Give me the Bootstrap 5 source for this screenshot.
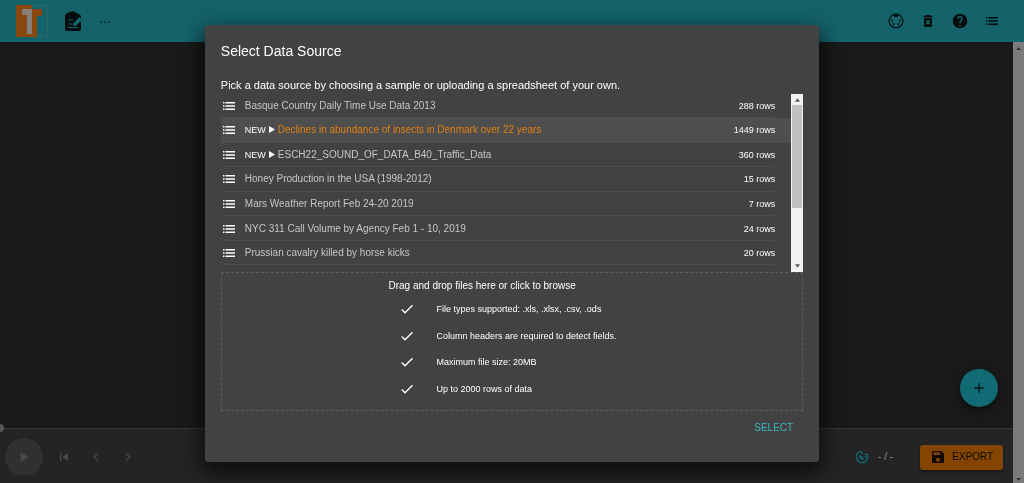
<!DOCTYPE html>
<html lang="en">
<head>
<meta charset="utf-8">
<meta name="viewport" content="width=device-width, initial-scale=1">
<title>TwoTone</title>
<link href="https://cdn.jsdelivr.net/npm/bootstrap@5.3.0/dist/css/bootstrap.min.css" rel="stylesheet">
<style>
body { font-family: "Liberation Sans", Arial, sans-serif; font-size: 10px; line-height: 16px; background: #191919; color: #fff; }
button { font: inherit; }
svg { display: block; fill: currentColor; flex: none; }
.tool { border: 0; background: none; padding: 0; color: inherit; display: flex; }
.topbar { background: #14636b; height: 42px; padding: 0 24px 0 15px; color: #030d0e; flex: none; }
.topbar-left { gap: 16px; }
.topbar-right { gap: 16px; }
.menu-btn { width: 16px; justify-content: center; }
.logo-art { width: 34px; height: 34px; }
.page-scroll { width: 11px; background: #7b7b7b; color: #303030; flex: none; padding: 5px 0 2px; }
.add-btn { right: 15px; bottom: 21px; width: 38px; height: 38px; border-radius: 50%; background: #126b74; color: #06191b; border: 0; padding: 0; box-shadow: 0 3px 6px rgba(0,0,0,.5); }
.timeline { appearance: none; display: block; width: calc(100% + 4px); height: 8px; margin: -4px 0 -3px -4px; background: linear-gradient(#353535, #353535) center / 100% 1px no-repeat; position: relative; }
.timeline::-webkit-slider-thumb { appearance: none; width: 8px; height: 8px; border-radius: 50%; background: #555; }
.transport { background: #242424; color: #4a4a4a; height: 54px; padding: 2px 10px 0 5px; }
.play-btn { width: 38px; height: 38px; border-radius: 50%; background: #303030; }
.steps { gap: 16px; margin-left: 13px; }
.speed-btn { color: #126b74; }
.readout { color: #929292; margin-right: 27px; }
.export-btn { background: #854500; color: #130a00; height: 25px; border: 0; border-radius: 3px; padding: 0 10px; gap: 6px; box-shadow: 0 2px 3px rgba(0,0,0,.4); }
.picker { width: 60%; background: #424242; border-radius: 3px; padding: 16px 16px 26px; margin-top: 3px; box-shadow: 0 8px 20px 4px rgba(0,0,0,.6); }
.picker-title { font-size: 14px; line-height: 20px; margin: 0 0 16px; font-weight: 400; }
.picker-lead { font-size: 11px; line-height: 16px; margin: 0; }
.sources { height: 179px; }
.source-list { display: grid; grid-auto-rows: 1fr; height: 172px; margin-top: 1px; }
.source { width: 100%; height: 100%; text-align: left; color: #c6c6c6; background: none; border: 0; padding: 0 16px 0 2px; gap: 10px; }
.source.active { background: #4e4e4e; color: #e07f12; }
.source-list li { background: linear-gradient(#4d4d4d, #4d4d4d) left bottom / calc(100% - 16px) 1px no-repeat; }
.source svg, .source .tag, .source .count { color: #fff; }
.source .tag, .source .count, .rules { font-size: 9px; }
.source .tag { margin-right: 3px; }
.source .tag svg { display: inline-block; margin: -2px 0 0 3px; }
.list-scroll { width: 12px; margin-top: 1px; background: #f1f1f1; color: #555; padding: 4px 1px; }
.list-scroll .thumb { height: 103px; margin-top: 3px; margin-bottom: auto; background: #c1c1c1; width: 100%; }
.dropzone { display: block; border: 1px dashed #5e5e5e; height: 139px; cursor: pointer; padding-top: 5px; }
.dropzone-inner { width: 247px; }
.rules { display: grid; grid-auto-rows: 1fr; height: 107px; margin: 2px 0 0; padding-left: 11px; }
.rules svg { margin-right: 21px; }
.select-btn { color: #37b6c4; padding: 0 10px; margin-top: 9px; }
</style>
</head>
<body class="vh-100 d-flex flex-column overflow-hidden">
<svg class="d-none">
  <symbol id="i-list" viewBox="0 0 12 12"><path d="M0 2h1.500v1.500H0zM0 5.200h1.500v1.500H0zM0 8.400h1.500v1.500H0zM2.500 2H12v1.500H2.500zM2.500 5.200H12v1.500H2.500zM2.500 8.400H12v1.500H2.500z"/></symbol>
  <symbol id="i-check" viewBox="0 0 24 24"><path d="M9 16.200 4.800 12l-1.400 1.400L9 19 21 7l-1.400-1.400z"/></symbol>
  <symbol id="i-up" viewBox="0 0 6 4"><path d="M3 0 6 4H0z"/></symbol>
  <symbol id="i-down" viewBox="0 0 6 4"><path d="M3 4 6 0H0z"/></symbol>
  <symbol id="i-right" viewBox="0 0 6 7"><path d="M0 0 6 3.500 0 7z"/></symbol>
</svg>

<header class="topbar d-flex align-items-center justify-content-between">
  <div class="topbar-left d-flex align-items-center">
    <svg class="logo-art" viewBox="0 0 34 34" role="img" aria-label="TwoTone"><path d="M1.500 1.500h31v31h-31z" fill="none" stroke="#2d6866"/><path fill="#8a4710" d="M1 1h16v4h10v7h-5v21H1z"/><path fill="#857e7a" d="M7 5h10v25h-5V11H7z"/></svg>
    <button class="tool" aria-label="Edit project"><svg width="16" height="22" viewBox="0 0 16 22"><path d="M8 1 14 4q2 1 2 3v12q0 2-2 2H2q-2 0-2-2V6q0-2 2-3z"/><path d="M3 10h5M3 14h4M3 17.500h10" fill="none" stroke="#14636b" stroke-width="1.200"/><path d="m14.500 7 1.500 1.500v2.500L10.500 16H8v-2.500z" fill="#14636b"/></svg></button>
    <button class="tool" aria-label="More"><svg width="16" height="12" viewBox="0 0 16 12"><circle cx="4" cy="7" r=".8"/><circle cx="8" cy="7" r=".8"/><circle cx="12" cy="7" r=".8"/></svg></button>
  </div>
  <div class="topbar-right d-flex align-items-center">
    <button class="tool" aria-label="MIDI"><svg width="16" height="16" viewBox="0 0 16 16"><circle cx="8" cy="8" r="6.900" fill="none" stroke="currentColor" stroke-width="1.300"/><path d="M6 2h4v2H6z"/><circle cx="4.200" cy="7.500" r="1"/><circle cx="11.800" cy="7.500" r="1"/><circle cx="5.600" cy="11" r="1"/><circle cx="10.400" cy="11" r="1"/></svg></button>
    <button class="tool" aria-label="Delete"><svg width="16" height="16" viewBox="0 0 24 24"><path d="M6 19c0 1.100.9 2 2 2h8c1.100 0 2-.9 2-2V7H6zm2.500-7.100 1.400-1.400 2.100 2.100 2.100-2.100 1.400 1.400-2.100 2.100 2.100 2.100-1.400 1.400L12 15.400l-2.100 2.100-1.400-1.400 2.100-2.100zM15.500 4l-1-1h-5l-1 1H5v2h14V4z"/></svg></button>
    <button class="tool" aria-label="Help"><svg width="16" height="16" viewBox="1 1 22 22"><path d="M12 2a10 10 0 1 0 0 20 10 10 0 0 0 0-20zm1 17h-2v-2h2zm2.100-7.700-.9.900C13.400 12.900 13 13.500 13 15h-2v-.5c0-1.100.4-2.100 1.200-2.800l1.200-1.300A2 2 0 1 0 10 9H8a4 4 0 1 1 7.100 2.300z"/></svg></button>
    <button class="tool menu-btn" aria-label="Menu"><svg width="12" height="12"><use href="#i-list"/></svg></button>
  </div>
</header>

<div class="d-flex flex-fill">
  <main class="d-flex flex-column flex-fill overflow-hidden">
    <section class="flex-fill position-relative">
      <button class="add-btn position-absolute d-flex align-items-center justify-content-center" aria-label="Add track"><svg width="16" height="16" viewBox="0 0 24 24"><path d="M19 13h-6v6h-2v-6H5v-2h6V5h2v6h6z"/></svg></button>
    </section>
    <input class="timeline" type="range" value="0" aria-label="Playback position">
    <footer class="transport d-flex align-items-center">
      <button class="tool play-btn align-items-center justify-content-center" aria-label="Play"><svg width="16" height="16" viewBox="0 0 24 24"><path d="M7 5v14l12-7z"/></svg></button>
      <div class="steps d-flex flex-fill">
        <button class="tool" aria-label="Back to start"><svg width="16" height="16" viewBox="0 0 24 24"><path d="M6 6h2v12H6zm3.500 6 8.500 6V6z"/></svg></button>
        <button class="tool" aria-label="Previous"><svg width="16" height="16" viewBox="0 0 24 24"><path d="M15.400 7.400 14 6l-6 6 6 6 1.400-1.400L10.800 12z"/></svg></button>
        <button class="tool" aria-label="Next"><svg width="16" height="16" viewBox="0 0 24 24"><path d="M10 6 8.600 7.400l4.600 4.600-4.600 4.600L10 18l6-6z"/></svg></button>
      </div>
      <button class="tool speed-btn me-2" aria-label="Speed"><svg width="16" height="16" viewBox="0 0 24 24"><path d="M12 2.500a9.500 9.500 0 1 0 7.500 3.700L18 8a7.500 7.500 0 1 1-5-3.400V8h-2V2.500z"/><path d="m6.500 8 7 4.500a2 2 0 1 1-3 2.500zM15 7h2v2h-2zM16 11h2v2h-2zM6 12h2v2H6z"/></svg></button>
      <span class="readout">- / -</span>
      <button class="export-btn d-flex align-items-center"><svg width="16" height="16" viewBox="0 0 24 24"><path d="M17 3H5a2 2 0 0 0-2 2v14c0 1.100.9 2 2 2h14a2 2 0 0 0 2-2V7zm-5 16a3 3 0 1 1 0-6 3 3 0 0 1 0 6zm3-10H5V5h10z"/></svg>EXPORT</button>
    </footer>
  </main>
  <div class="page-scroll d-flex flex-column align-items-center justify-content-between" aria-hidden="true">
    <svg width="5" height="3"><use href="#i-up"/></svg><svg width="5" height="3"><use href="#i-down"/></svg>
  </div>
</div>

<div class="position-fixed top-0 start-0 w-100 h-100 d-flex align-items-center justify-content-center">
  <div class="picker" role="dialog" aria-modal="true" aria-labelledby="picker-title">
    <h1 class="picker-title" id="picker-title">Select Data Source</h1>
    <p class="picker-lead">Pick a data source by choosing a sample or uploading a spreadsheet of your own.</p>
    <div class="sources d-flex">
      <ul class="source-list list-unstyled flex-fill mb-0">
        <li><button class="source d-flex align-items-center"><svg width="12" height="12"><use href="#i-list"/></svg><span class="flex-fill">Basque Country Daily Time Use Data 2013</span><span class="count">288 rows</span></button></li>
        <li><button class="source active d-flex align-items-center"><svg width="12" height="12"><use href="#i-list"/></svg><span class="flex-fill"><span class="tag">NEW<svg width="6" height="7"><use href="#i-right"/></svg></span>Declines in abundance of insects in Denmark over 22 years</span><span class="count">1449 rows</span></button></li>
        <li><button class="source d-flex align-items-center"><svg width="12" height="12"><use href="#i-list"/></svg><span class="flex-fill"><span class="tag">NEW<svg width="6" height="7"><use href="#i-right"/></svg></span>ESCH22_SOUND_OF_DATA_B40_Traffic_Data</span><span class="count">360 rows</span></button></li>
        <li><button class="source d-flex align-items-center"><svg width="12" height="12"><use href="#i-list"/></svg><span class="flex-fill">Honey Production in the USA (1998-2012)</span><span class="count">15 rows</span></button></li>
        <li><button class="source d-flex align-items-center"><svg width="12" height="12"><use href="#i-list"/></svg><span class="flex-fill">Mars Weather Report Feb 24-20 2019</span><span class="count">7 rows</span></button></li>
        <li><button class="source d-flex align-items-center"><svg width="12" height="12"><use href="#i-list"/></svg><span class="flex-fill">NYC 311 Call Volume by Agency Feb 1 - 10, 2019</span><span class="count">24 rows</span></button></li>
        <li><button class="source d-flex align-items-center"><svg width="12" height="12"><use href="#i-list"/></svg><span class="flex-fill">Prussian cavalry killed by horse kicks</span><span class="count">20 rows</span></button></li>
      </ul>
      <div class="list-scroll d-flex flex-column align-items-center" aria-hidden="true"><svg width="5" height="4"><use href="#i-up"/></svg><div class="thumb"></div><svg width="5" height="4"><use href="#i-down"/></svg></div>
    </div>
    <label class="dropzone">
      <input type="file" class="visually-hidden" accept=".xls,.xlsx,.csv,.ods">
      <div class="dropzone-inner mx-auto">
        <div>Drag and drop files here or click to browse</div>
        <ul class="rules list-unstyled">
          <li class="d-flex align-items-center"><svg width="16" height="16"><use href="#i-check"/></svg>File types supported: .xls, .xlsx, .csv, .ods</li>
          <li class="d-flex align-items-center"><svg width="16" height="16"><use href="#i-check"/></svg>Column headers are required to detect fields.</li>
          <li class="d-flex align-items-center"><svg width="16" height="16"><use href="#i-check"/></svg>Maximum file size: 20MB</li>
          <li class="d-flex align-items-center"><svg width="16" height="16"><use href="#i-check"/></svg>Up to 2000 rows of data</li>
        </ul>
      </div>
    </label>
    <div class="d-flex justify-content-end"><button class="tool select-btn">SELECT</button></div>
  </div>
</div>
<script src="https://cdn.jsdelivr.net/npm/bootstrap@5.3.0/dist/js/bootstrap.bundle.min.js"></script>
</body>
</html>
